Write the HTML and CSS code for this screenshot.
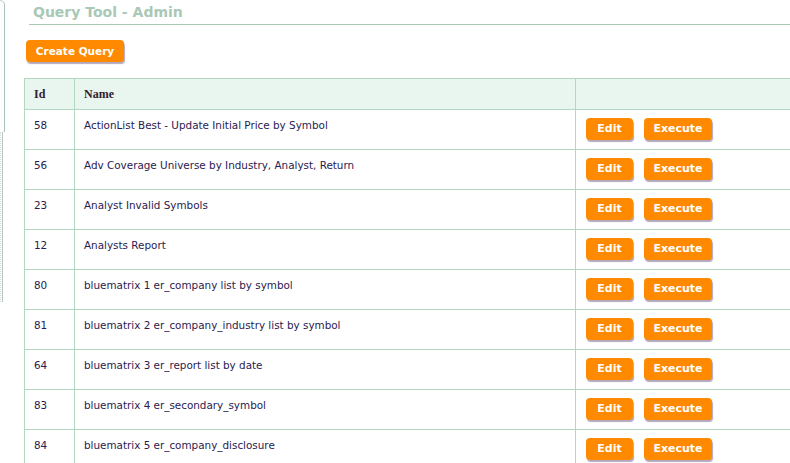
FILE: index.html
```html
<!DOCTYPE html>
<html>
<head>
<meta charset="utf-8">
<link rel="stylesheet" href="styles.css">
</head>
<body>
<div class="frame">
  <div class="rail">
    <div class="rail-top"></div>
    <div class="rail-bottom"></div>
  </div>
  <div class="main">
    <h1 class="title">Query Tool - Admin</h1>
    <div class="toolbar"><button class="btn btn-create">Create Query</button></div>
    <table class="grid">
      <thead>
        <tr><th class="c-id">Id</th><th class="c-name">Name</th><th class="c-act"></th></tr>
      </thead>
      <tbody>
        <tr><td>58</td><td>ActionList Best - Update Initial Price by Symbol</td><td class="acts"><button class="btn">Edit</button><button class="btn">Execute</button></td></tr>
        <tr><td>56</td><td>Adv Coverage Universe by Industry, Analyst, Return</td><td class="acts"><button class="btn">Edit</button><button class="btn">Execute</button></td></tr>
        <tr><td>23</td><td>Analyst Invalid Symbols</td><td class="acts"><button class="btn">Edit</button><button class="btn">Execute</button></td></tr>
        <tr><td>12</td><td>Analysts Report</td><td class="acts"><button class="btn">Edit</button><button class="btn">Execute</button></td></tr>
        <tr><td>80</td><td>bluematrix 1 er_company list by symbol</td><td class="acts"><button class="btn">Edit</button><button class="btn">Execute</button></td></tr>
        <tr><td>81</td><td>bluematrix 2 er_company_industry list by symbol</td><td class="acts"><button class="btn">Edit</button><button class="btn">Execute</button></td></tr>
        <tr><td>64</td><td>bluematrix 3 er_report list by date</td><td class="acts"><button class="btn">Edit</button><button class="btn">Execute</button></td></tr>
        <tr><td>83</td><td>bluematrix 4 er_secondary_symbol</td><td class="acts"><button class="btn">Edit</button><button class="btn">Execute</button></td></tr>
        <tr><td>84</td><td>bluematrix 5 er_company_disclosure</td><td class="acts"><button class="btn">Edit</button><button class="btn">Execute</button></td></tr>
      </tbody>
    </table>
  </div>
</div>
</body>
</html>
```

FILE: styles.css
```css
html, body {
  margin: 0;
  padding: 0;
  overflow: hidden;
  background: #ffffff;
}
body {
  font-family: "DejaVu Sans", Verdana, sans-serif;
  width: 790px;
  height: 463px;
}
.frame {
  display: flex;
  align-items: flex-start;
}
.rail {
  width: 5px;
  flex: none;
  display: flex;
  flex-direction: column;
}
.rail-top {
  height: 132px;
  border-right: 1px solid #a9c3b9;
  border-top-right-radius: 7px;
  border-top: 1px solid #c8d8d0;
  box-sizing: border-box;
  width: 5px;
}
.rail-bottom {
  height: 170px;
  width: 3px;
  border-right: 1px solid #b9c6c0;
  border-left: 1px dotted #d4dcd8;
  box-sizing: border-box;
}
.main {
  flex: 1;
  padding-left: 19px;
  min-width: 0;
}
.title {
  margin: 4px 0 0 5px;
  padding: 0 0 3px 4px;
  font-size: 14px;
  font-weight: bold;
  color: #a9c8b6;
  border-bottom: 1px solid #a9c8ae;
  line-height: 17px;
}
.toolbar {
  margin-top: 15px;
  padding-left: 2px;
  height: 22px;
}
.btn {
  font-family: "DejaVu Sans", Verdana, sans-serif;
  font-weight: bold;
  font-size: 11px;
  color: #ffffff;
  background: #ff8a00;
  border: none;
  border-radius: 4px;
  height: 22px;
  padding: 0 10px;
  box-shadow: 1px 2px 1px #b4a8bc;
  line-height: 22px;
  white-space: nowrap;
  cursor: pointer;
}
.btn-create {
  width: 98px;
  padding: 0;
  font-size: 10.5px;
}
.grid {
  margin-top: 16px;
  border-collapse: collapse;
  width: 800px;
  table-layout: fixed;
  font-size: 10.4px;
  color: #2a1a50;
}
.grid th, .grid td {
  border: 1px solid #b4d8bf;
  text-align: left;
  vertical-align: top;
}
.grid thead th {
  height: 31px;
  padding: 0 9px;
  box-sizing: border-box;
  background: #e9f5ef;
  font-family: "Liberation Serif", serif;
  font-size: 12px;
  font-weight: bold;
  color: #302030;
  vertical-align: middle;
}
.c-id { width: 50px; }
.c-name { width: 501px; }
.grid tbody td {
  height: 40px;
  box-sizing: border-box;
  padding: 9px 9px 0;
  line-height: 13px;
}
.grid tbody td.acts {
  padding: 8px 10px 0;
}
.acts .btn {
  width: 47px;
  padding: 0;
}
.acts .btn + .btn {
  margin-left: 11px;
  width: 68px;
}
```
